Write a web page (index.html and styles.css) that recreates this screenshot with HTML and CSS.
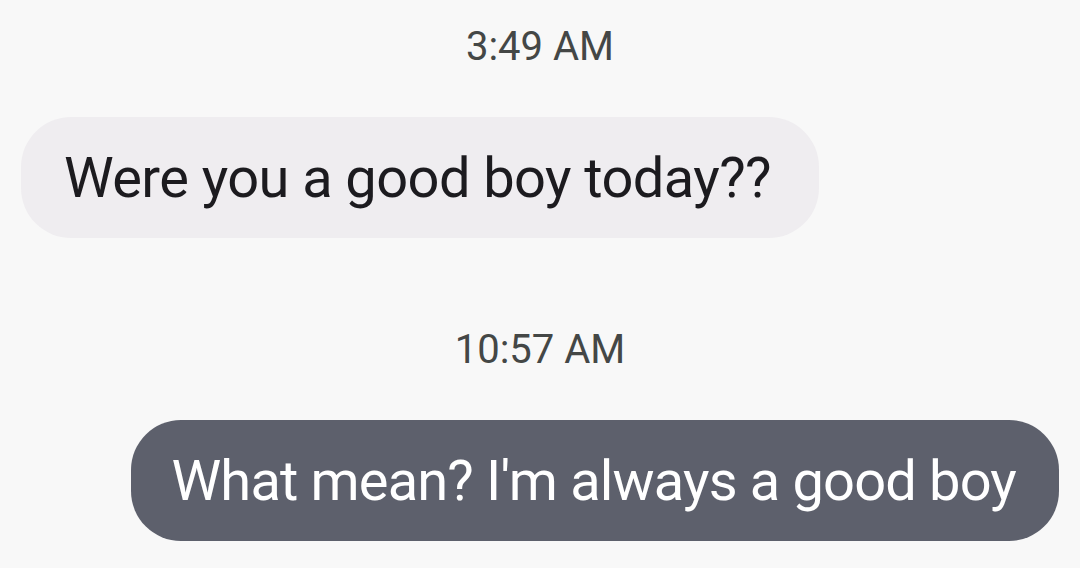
FILE: index.html
```html
<!DOCTYPE html>
<html>
<head>
<meta charset="utf-8">
<link rel="stylesheet" href="styles.css">
</head>
<body>
<div class="thread">
  <div class="group">
    <div class="time">3:49 AM</div>
    <div class="row incoming"><div class="bubble in">Were you a good boy today??</div></div>
  </div>
  <div class="group">
    <div class="time">10:57 AM</div>
    <div class="row outgoing"><div class="bubble out">What mean? I'm always a good boy</div></div>
  </div>
</div>
</body>
</html>
```
FILE: styles.css
```css
html, body {
  margin: 0;
  padding: 0;
  background: #f8f8f8;
  font-family: Roboto, "Noto Sans", sans-serif;
}
.thread {
  display: flex;
  flex-direction: column;
  padding: 27px 21px 0 21px;
  gap: 92px;
}
.group {
  display: flex;
  flex-direction: column;
  gap: 50px;
}
.time {
  text-align: center;
  font-size: 40px;
  line-height: 40px;
  color: #444746;
}
.row {
  display: flex;
}
.incoming { justify-content: flex-start; }
.outgoing { justify-content: flex-end; }
.bubble {
  font-size: 56px;
  line-height: 56px;
  border-radius: 50px;
  white-space: nowrap;
}
.in {
  background: #efedf0;
  color: #1c1b1f;
  padding: 33px 48px 32px 43px;
  letter-spacing: -0.58px;
}
.out {
  background: #5d606c;
  color: #ffffff;
  padding: 33px 43px 32px 41px;
  letter-spacing: -0.84px;
}
```
